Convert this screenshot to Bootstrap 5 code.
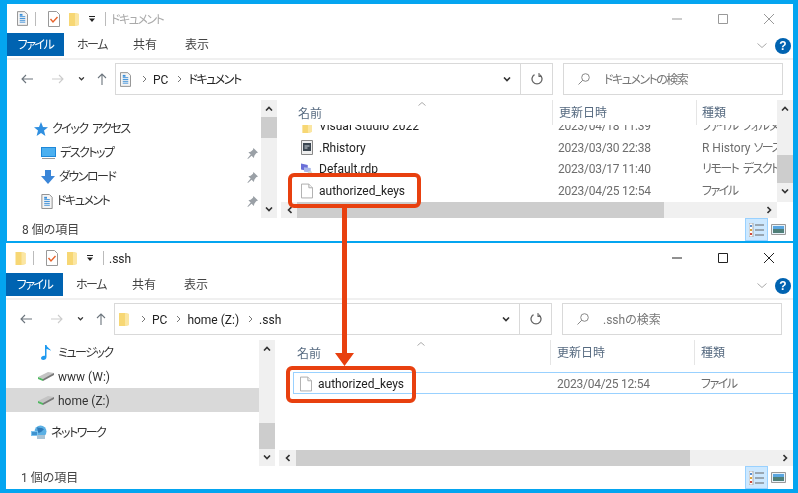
<!DOCTYPE html>
<html lang="ja">
<head>
<meta charset="UTF-8">
<title>authorized_keys</title>
<link href="https://cdn.jsdelivr.net/npm/bootstrap@5.3.0/dist/css/bootstrap.min.css" rel="stylesheet">
<style>
body { background: #04a5f0; width: 798px; height: 493px; overflow: hidden; font-family: Roboto, "Noto Sans CJK JP", sans-serif; font-size: 12px; color: #222; font-feature-settings: "palt"; }
svg { display: block; flex: none; }
.desk { position: relative; width: 798px; height: 493px; filter: blur(.35px); }
.expl { position: absolute; background: #fff; }
.expl-a { left: 7px; top: 4px; width: 786px; height: 237px; }
.expl-b { left: 6px; top: 243px; width: 787px; height: 246px; }
.kn { letter-spacing: -1.5px; word-spacing: 3px; }
.title-row { height: 29px; padding-left: 10px; color: #222; }
.expl-b .title-row { height: 30px; padding-left: 9px; }
.expl-a .title-row { color: #aaa; }
.title-row > span { padding-top: 2px; }
.t-first { margin-right: 7px; }
.t-check { margin-left: 12px; }
.t-fold { margin-left: 9px; }
.t-more { margin-left: 10px; }
.t-sep { width: 1px; height: 14px; background: #bbb; }
.t-sep2 { margin-left: 10px; margin-right: 5px; }
.win-btns { margin-left: auto; padding-right: 19px; gap: 36px; color: #222; }
.expl-a .win-btns { color: #999; }
.tab-row { height: 23px; }
.rb-tab { height: 23px; padding-left: 13px; color: #444; line-height: 25px; }
.tab-file { width: 57px; padding: 0; text-align: center; background: #0063b1; color: #fff; }
.tab-home { width: 56px; } .tab-share { width: 52px; } .tab-view { width: 50px; }
.rb-right { margin-left: auto; padding-right: 2px; padding-top: 2px; gap: 8px; }
.help-dot { width: 16px; height: 16px; border-radius: 50%; background: #0063b1; color: #fff; font-weight: 700; font-size: 12px; line-height: 16px; text-align: center; font-family: "Liberation Sans", sans-serif; }
.tool-row { border-top: 2px solid #f0f0f0; height: 42px; padding-top: 3px; margin-top: 2px; }
.nav-arrows { width: 108px; flex: none; height: 32px; padding-left: 14px; }
.na-fwd { margin-left: 19px; color: #ccc; transform: scaleX(-1); }
.na-dn { margin-left: 14px; }
.na-up { margin-left: 12px; }
.addr-box { width: 438px; height: 32px; border: 1px solid #d9d9d9; padding-left: 4px; color: #222; }
.addr-box > span, .srch-box > span { padding-top: 2px; }
.crumb { margin-left: 9px; margin-right: 6px; }
.addr-folder { margin-right: 3px; }
.addr-doc { margin-right: 2px; }
.addr-end { margin-left: auto; }
.addr-chev { margin-right: 9px; }
.addr-refresh { width: 32px; height: 30px; border-left: 1px solid #d9d9d9; }
.srch-box { width: 220px; height: 32px; margin-left: 10px; border: 1px solid #d9d9d9; padding-left: 14px; gap: 14px; color: #777; }
.body-row { height: 118px; }
.expl-b .body-row { height: 126px; }
.side { width: 254px; flex: none; overflow: hidden; padding-top: 17px; color: #333; }
.expl-b .side { width: 253px; padding-top: 0; }
.expl-b .side-item span { padding-top: 2px; }
.side-item { height: 24px; }
.ind-1 { padding-left: 27px; gap: 4px; }
.ind-2 { padding-left: 34px; gap: 4px; }
.ind-d { padding-left: 32px; gap: 4px; }
.ind-m { padding-left: 35px; gap: 6px; }
.ind-3 { padding-left: 25px; gap: 4px; }
.side-on { background: #d9d9d9; }
.pin-ic { margin-left: auto; margin-right: 3px; }
.sbar { width: 16px; flex: none; background: #f0f0f0; }
.sb-btn { height: 17px; flex: none; }
.sb-thumb { background: #cdcdcd; flex: none; }
.sb-fill { flex: 1 1 auto; }
.files { flex: 1 1 auto; min-width: 0; margin-left: 3px; }
.expl-b .files { margin-left: 4px; }
.head-row { height: 25px; flex: none; color: #566a80; position: relative; }
.col-n { width: 272px; flex: none; }
.col-d { width: 144px; flex: none; }
.expl-b .col-n { width: 271px; }
.head-row .col-n { padding-left: 18px; padding-top: 2px; }
.head-row .col-d, .head-row .col-t { border-left: 1px solid #e5e5e5; padding-left: 6px; height: 25px; line-height: 27px; }
.expl-a .head-row .col-t { padding-left: 5px; }
.sort-ic { position: absolute; left: 138px; top: 2px; }
.list-wrap { flex: 1 1 auto; overflow: hidden; min-height: 0; }
.file-row { height: 21.5px; color: #6d6d6d; }
.row-first { margin-top: -9.5px; }
.file-row .col-n { padding-left: 21px; gap: 6px; color: #222; }
.file-row .col-d { padding-left: 6px; letter-spacing: -.25px; }
.file-row .col-t { padding-left: 6px; white-space: nowrap; }
.row-sel { height: 22px; margin-top: 7px; margin-left: 14px; border: 1px solid #99d1ff; border-right: 0; padding-top: 1px; }
.expl-b .row-sel .col-n { width: 256px; padding-left: 6px; }
.row-sel .col-d { padding-left: 7px; }
.row-sel .col-t { padding-left: 7px; }
.hbar { height: 16px; flex: none; background: #f0f0f0; margin-left: 1px; }
.expl-b .hbar { margin-left: 0; }
.hb-btn { width: 16px; flex: none; }
.hb-corner { width: 16px; flex: none; background: #fff; }
.hb-thumb { background: #cdcdcd; flex: none; }
.thumb-a { width: 367px; } .thumb-b { width: 394px; margin-left: 1px; }
.vthumb-a { margin-top: 38px; height: 28px; }
.sthumb-a { height: 21px; } .sthumb-b { height: 26px; margin-top: 66px; }
.stat-row { height: 23px; padding-left: 15px; color: #444; }
.view-btns { margin-left: auto; padding-right: 7px; gap: 3px; }
.view-on { width: 23px; height: 23px; background: #cce8ff; border: 1px solid #99d1ff; }
.hl-box { position: absolute; border: 4px solid #e8400f; border-radius: 6px; }
.hl-a { left: 288px; top: 173px; width: 133px; height: 35px; }
.hl-b { left: 286px; top: 366px; width: 130px; height: 37px; }
.drop-arrow { position: absolute; left: 334px; top: 208px; }
</style>
</head>
<body>
<svg width="0" height="0" style="position:absolute">
  <defs>
    <symbol id="i-folder" viewBox="0 0 10 14"><path d="M0 1h6l4 1v11l-4 1H0z" fill="#f7d774"/><path d="M6 1v13l4-1V2z" fill="#fbe6a2"/></symbol>
    <symbol id="i-docs" viewBox="0 0 12 16"><path d="M.5.5h8l3 3v12H.5z" fill="#f4f4f4" stroke="#8a8a8a"/><path d="M3 6h6M3 8h6M3 10h6M3 12h6" stroke="#3a8ed8"/><path d="M3 3h3v2H3z" fill="#3a8ed8"/></symbol>
    <symbol id="i-check" viewBox="0 0 12 16"><path d="M.5.5h8l3 3v12H.5z" fill="#fff" stroke="#999"/><path d="M2.5 8l2.5 3 4.5-5" fill="none" stroke="#e8642c" stroke-width="1.4"/></symbol>
    <symbol id="i-file" viewBox="0 0 13 16"><path d="M.5.5h8l4 4v11H.5z" fill="#fff" stroke="#a8a8a8"/><path d="M8.5.5v4h4" fill="#f2f2f2" stroke="#a8a8a8"/></symbol>
    <symbol id="i-star" viewBox="0 0 14 14"><path d="M7 0l2 5 5 .3-4 3.2L11.4 14 7 11l-4.4 3L4 8.5 0 5.3 5 5z" fill="#2f8fe0"/></symbol>
    <symbol id="i-desk" viewBox="0 0 15 12"><path d="M0 0h15v10H0z" fill="#1e88d9"/><path d="M1 1h13v8H1z" fill="#4cb0f0"/><path d="M1 11h13v1H1z" fill="#9a9a9a"/></symbol>
    <symbol id="i-down" viewBox="0 0 14 14"><path d="M4 0h6v6h4l-7 8-7-8h4z" fill="#3b86d8"/></symbol>
    <symbol id="i-pin" viewBox="0 0 12 12"><path d="M7 0l5 5-2 .6L8 8.5 7.5 11 5 8.5 1 12l-.5-.5L4 7 1.5 4.5 4 4l2.5-2z" fill="#9aa0a6"/></symbol>
    <symbol id="i-note" viewBox="0 0 11 15"><path d="M4 0h1.500c.3 2.500 4 3.500 4.500 6-1-1-3-1.800-4.500-2v8c0 1.800-1.500 3-3.300 3C.9 15 0 14.200 0 13c0-1.500 2-2.600 4-2.200z" fill="#1f9af0"/></symbol>
    <symbol id="i-drive" viewBox="0 0 16 10"><path d="M0 6l10-5 6 1-1 2L5 8z" fill="#c4c4c4"/><path d="M0 6l5 2v2L0 8z" fill="#4fb860"/><path d="M5 8l11-6v2L5 10z" fill="#777"/></symbol>
    <symbol id="i-net" viewBox="0 0 16 15"><circle cx="9.500" cy="6.500" r="6" fill="#5bb0e4"/><path d="M6 2c2 1.500 5 0 7 2.500-2 1-3 4-6 3z" fill="#2d79b8"/><path d="M0 6h7v5H0z" fill="#7cc2ee"/><path d="M1 7h5v3H1z" fill="#3f93d0"/><path d="M6 10h8v4H6z" fill="#a9c4d6"/></symbol>
    <symbol id="i-hist" viewBox="0 0 12 15"><path d="M.5.5h11v14H.5z" fill="#eee" stroke="#888"/><path d="M2 3h8v8H2z" fill="#3b4650"/><path d="M3.500 6h5M3.500 8h3" stroke="#cfd6dc"/></symbol>
    <symbol id="i-rdp" viewBox="0 0 16 16"><path d="M0 0l9 2v8L0 8z" fill="#6a6fd8"/><path d="M4 5l9 1v6l-9-1z" fill="#a9b6ea"/><circle cx="12" cy="13" r="3" fill="#cfd8cf"/></symbol>
    <symbol id="i-detail" viewBox="0 0 15 14"><path d="M0 0h4v14H0z" fill="#fff" stroke="#aaa"/><path d="M1 2h2v2H1z" fill="#5a8fd0"/><path d="M1 6h2v2H1z" fill="#d9a23a"/><path d="M1 10h2v2H1z" fill="#d04a3a"/><path d="M6 2h9M6 7h9M6 12h9" stroke="#666"/></symbol>
    <symbol id="i-thumb" viewBox="0 0 15 11"><path d="M.5.5h14v10H.5z" fill="#e8f2fa" stroke="#999"/><path d="M2 2h11v3H2z" fill="#5aa6e0"/><path d="M2 5h11v4H2z" fill="#4f7f78"/></symbol>
    <symbol id="i-up" viewBox="0 0 8 5"><path d="M1 4.500l3-3 3 3" fill="none" stroke="#333" stroke-width="1.600"/></symbol>
    <symbol id="i-dn" viewBox="0 0 8 5"><path d="M1 .5l3 3 3-3" fill="none" stroke="#333" stroke-width="1.600"/></symbol>
    <symbol id="i-lf" viewBox="0 0 5 8"><path d="M4.500 1l-3 3 3 3" fill="none" stroke="#333" stroke-width="1.600"/></symbol>
    <symbol id="i-rt" viewBox="0 0 5 8"><path d="M.5 1l3 3-3 3" fill="none" stroke="#333" stroke-width="1.600"/></symbol>
    <symbol id="i-back" viewBox="0 0 12 10"><path d="M12 5H1M5 1L1 5l4 4" fill="none" stroke="currentColor" stroke-width="1.100"/></symbol>
    <symbol id="i-upar" viewBox="0 0 10 12"><path d="M5 12V1M1 5l4-4 4 4" fill="none" stroke="currentColor" stroke-width="1.100"/></symbol>
    <symbol id="i-refresh" viewBox="0 0 12 12"><path d="M8.500 1.600a5 5 0 1 1-5 0" fill="none" stroke="#666" stroke-width="1.300"/><path d="M8 0v3.500h3" fill="none" stroke="#666" stroke-width="1.100"/></symbol>
    <symbol id="i-find" viewBox="0 0 12 12"><circle cx="7.500" cy="4.500" r="3.800" fill="none" stroke="#888"/><path d="M4.800 7.200L.5 11.500" stroke="#888"/></symbol>
    <symbol id="i-crumb" viewBox="0 0 5 8"><path d="M1 1l3 3-3 3" fill="none" stroke="#777"/></symbol>
    <symbol id="i-min" viewBox="0 0 10 10"><path d="M0 5h10" stroke="currentColor"/></symbol>
    <symbol id="i-max" viewBox="0 0 10 10"><path d="M.5.5h9v9h-9z" fill="none" stroke="currentColor"/></symbol>
    <symbol id="i-close" viewBox="0 0 10 10"><path d="M0 0l10 10M10 0L0 10" stroke="currentColor"/></symbol>
    <symbol id="i-more" viewBox="0 0 6 6"><path d="M0 0h6v1H0zM0 2.500h6L3 6z" fill="#222"/></symbol>
    <symbol id="i-fold" viewBox="0 0 10 5"><path d="M.5.5L5 4.500 9.500.5" fill="none" stroke="#aaa"/></symbol>
    <symbol id="i-sort" viewBox="0 0 8 4"><path d="M.5 3.500L4 .5l3.500 3" fill="none" stroke="#aaa"/></symbol>
  </defs>
</svg>

<div class="desk">
  <!-- upper window -->
  <div class="expl expl-a d-flex flex-column">
    <div class="title-row d-flex align-items-center">
      <svg class="t-first" width="11" height="15"><use href="#i-docs"/></svg>
      <div class="t-sep"></div>
      <svg class="t-check" width="12" height="16"><use href="#i-check"/></svg>
      <svg class="t-fold" width="10" height="14"><use href="#i-folder"/></svg>
      <svg class="t-more" width="6" height="6"><use href="#i-more"/></svg>
      <div class="t-sep t-sep2"></div>
      <span class="kn">ドキュメント</span>
      <div class="win-btns d-flex align-items-center">
        <svg width="10" height="10"><use href="#i-min"/></svg>
        <svg width="10" height="10"><use href="#i-max"/></svg>
        <svg width="10" height="10"><use href="#i-close"/></svg>
      </div>
    </div>
    <div class="tab-row d-flex">
      <div class="rb-tab tab-file kn">ファイル</div>
      <div class="rb-tab tab-home kn">ホーム</div>
      <div class="rb-tab tab-share">共有</div>
      <div class="rb-tab tab-view">表示</div>
      <div class="rb-right d-flex align-items-center">
        <svg width="10" height="5"><use href="#i-fold"/></svg>
        <div class="help-dot">?</div>
      </div>
    </div>
    <div class="tool-row d-flex">
      <div class="nav-arrows d-flex align-items-center">
        <svg class="text-secondary" width="12" height="10"><use href="#i-back"/></svg>
        <svg class="na-fwd" width="12" height="10"><use href="#i-back"/></svg>
        <svg class="na-dn" width="7" height="4"><use href="#i-dn"/></svg>
        <svg class="na-up text-secondary" width="10" height="12"><use href="#i-upar"/></svg>
      </div>
      <div class="addr-box d-flex align-items-center">
        <svg class="addr-doc" width="11" height="15"><use href="#i-docs"/></svg>
        <svg class="crumb" width="5" height="8"><use href="#i-crumb"/></svg>
        <span>PC</span>
        <svg class="crumb" width="5" height="8"><use href="#i-crumb"/></svg>
        <span class="kn">ドキュメント</span>
        <div class="addr-end d-flex align-items-center">
          <svg class="addr-chev" width="8" height="5"><use href="#i-dn"/></svg>
          <div class="addr-refresh d-flex align-items-center justify-content-center"><svg width="12" height="12"><use href="#i-refresh"/></svg></div>
        </div>
      </div>
      <div class="srch-box d-flex align-items-center">
        <svg width="12" height="12"><use href="#i-find"/></svg>
        <span class="kn">ドキュメントの検索</span>
      </div>
    </div>
    <div class="body-row d-flex">
      <div class="side">
        <div class="side-item ind-1 d-flex align-items-center"><svg width="14" height="14"><use href="#i-star"/></svg><span class="kn">クイック アクセス</span></div>
        <div class="side-item ind-2 d-flex align-items-center"><svg width="15" height="12"><use href="#i-desk"/></svg><span class="kn">デスクトップ</span><svg class="pin-ic" width="11" height="11"><use href="#i-pin"/></svg></div>
        <div class="side-item ind-2 d-flex align-items-center"><svg width="14" height="14"><use href="#i-down"/></svg><span class="kn">ダウンロード</span><svg class="pin-ic" width="11" height="11"><use href="#i-pin"/></svg></div>
        <div class="side-item ind-2 d-flex align-items-center"><svg width="12" height="15"><use href="#i-docs"/></svg><span class="kn">ドキュメント</span><svg class="pin-ic" width="11" height="11"><use href="#i-pin"/></svg></div>
      </div>
      <div class="sbar d-flex flex-column">
        <div class="sb-btn d-flex align-items-center justify-content-center"><svg width="8" height="5"><use href="#i-up"/></svg></div>
        <div class="sb-thumb sthumb-a"></div>
        <div class="sb-fill"></div>
        <div class="sb-btn d-flex align-items-center justify-content-center"><svg width="8" height="5"><use href="#i-dn"/></svg></div>
      </div>
      <div class="files d-flex flex-column">
        <div class="d-flex flex-grow-1" style="min-height:0">
          <div class="d-flex flex-column flex-grow-1" style="min-width:0">
            <div class="head-row d-flex align-items-center">
              <div class="col-n">名前</div>
              <div class="col-d">更新日時</div>
              <div class="col-t flex-grow-1">種類</div>
              <svg class="sort-ic" width="8" height="4"><use href="#i-sort"/></svg>
            </div>
            <div class="list-wrap">
              <div class="file-row row-first d-flex align-items-center"><div class="col-n d-flex align-items-center"><svg width="12" height="13"><use href="#i-folder"/></svg><span>Visual Studio 2022</span></div><div class="col-d">2023/04/18 11:39</div><div class="col-t kn">ファイル フォルダー</div></div>
              <div class="file-row d-flex align-items-center"><div class="col-n d-flex align-items-center"><svg width="12" height="15"><use href="#i-hist"/></svg><span>.Rhistory</span></div><div class="col-d">2023/03/30 22:38</div><div class="col-t">R History <span class="kn">ソース</span></div></div>
              <div class="file-row d-flex align-items-center"><div class="col-n d-flex align-items-center"><svg width="12" height="15"><use href="#i-rdp"/></svg><span>Default.rdp</span></div><div class="col-d">2023/03/17 11:40</div><div class="col-t kn">リモート デスクトップ</div></div>
              <div class="file-row d-flex align-items-center"><div class="col-n d-flex align-items-center"><svg width="12" height="16"><use href="#i-file"/></svg><span>authorized_keys</span></div><div class="col-d">2023/04/25 12:54</div><div class="col-t kn">ファイル</div></div>
            </div>
          </div>
          <div class="sbar d-flex flex-column">
            <div class="sb-btn d-flex align-items-center justify-content-center"><svg width="8" height="5"><use href="#i-up"/></svg></div>
            <div class="sb-thumb vthumb-a"></div>
            <div class="sb-btn d-flex align-items-center justify-content-center"><svg width="8" height="5"><use href="#i-dn"/></svg></div>
          </div>
        </div>
        <div class="hbar d-flex">
          <div class="hb-btn d-flex align-items-center justify-content-center"><svg width="5" height="8"><use href="#i-lf"/></svg></div>
          <div class="hb-thumb thumb-a"></div>
          <div class="sb-fill"></div>
          <div class="hb-btn d-flex align-items-center justify-content-center"><svg width="5" height="8"><use href="#i-rt"/></svg></div>
          <div class="hb-corner"></div>
        </div>
      </div>
    </div>
    <div class="stat-row d-flex align-items-center">
      <span>8 個の項目</span>
      <div class="view-btns d-flex align-items-center">
        <div class="view-on d-flex align-items-center justify-content-center"><svg width="15" height="14"><use href="#i-detail"/></svg></div>
        <svg width="15" height="11"><use href="#i-thumb"/></svg>
      </div>
    </div>
  </div>

  <!-- lower window -->
  <div class="expl expl-b d-flex flex-column">
    <div class="title-row d-flex align-items-center">
      <svg class="t-first" width="11" height="14"><use href="#i-folder"/></svg>
      <div class="t-sep"></div>
      <svg class="t-check" width="12" height="16"><use href="#i-check"/></svg>
      <svg class="t-fold" width="10" height="14"><use href="#i-folder"/></svg>
      <svg class="t-more" width="6" height="6"><use href="#i-more"/></svg>
      <div class="t-sep t-sep2"></div>
      <span>.ssh</span>
      <div class="win-btns d-flex align-items-center">
        <svg width="10" height="10"><use href="#i-min"/></svg>
        <svg width="10" height="10"><use href="#i-max"/></svg>
        <svg width="10" height="10"><use href="#i-close"/></svg>
      </div>
    </div>
    <div class="tab-row d-flex">
      <div class="rb-tab tab-file kn">ファイル</div>
      <div class="rb-tab tab-home kn">ホーム</div>
      <div class="rb-tab tab-share">共有</div>
      <div class="rb-tab tab-view">表示</div>
      <div class="rb-right d-flex align-items-center">
        <svg width="10" height="5"><use href="#i-fold"/></svg>
        <div class="help-dot">?</div>
      </div>
    </div>
    <div class="tool-row d-flex">
      <div class="nav-arrows d-flex align-items-center">
        <svg class="text-secondary" width="12" height="10"><use href="#i-back"/></svg>
        <svg class="na-fwd" width="12" height="10"><use href="#i-back"/></svg>
        <svg class="na-dn" width="7" height="4"><use href="#i-dn"/></svg>
        <svg class="na-up text-secondary" width="10" height="12"><use href="#i-upar"/></svg>
      </div>
      <div class="addr-box d-flex align-items-center">
        <svg class="addr-folder" width="10" height="14"><use href="#i-folder"/></svg>
        <svg class="crumb" width="5" height="8"><use href="#i-crumb"/></svg>
        <span>PC</span>
        <svg class="crumb" width="5" height="8"><use href="#i-crumb"/></svg>
        <span>home (Z:)</span>
        <svg class="crumb" width="5" height="8"><use href="#i-crumb"/></svg>
        <span>.ssh</span>
        <div class="addr-end d-flex align-items-center">
          <svg class="addr-chev" width="8" height="5"><use href="#i-dn"/></svg>
          <div class="addr-refresh d-flex align-items-center justify-content-center"><svg width="12" height="12"><use href="#i-refresh"/></svg></div>
        </div>
      </div>
      <div class="srch-box d-flex align-items-center">
        <svg width="12" height="12"><use href="#i-find"/></svg>
        <span>.sshの検索</span>
      </div>
    </div>
    <div class="body-row d-flex">
      <div class="side">
        <div class="side-item ind-m d-flex align-items-center"><svg width="11" height="15"><use href="#i-note"/></svg><span class="kn">ミュージック</span></div>
        <div class="side-item ind-d d-flex align-items-center"><svg width="16" height="10"><use href="#i-drive"/></svg><span>www (W:)</span></div>
        <div class="side-item ind-d side-on d-flex align-items-center"><svg width="16" height="10"><use href="#i-drive"/></svg><span>home (Z:)</span></div>
        <div class="side-item ind-3 mt-2 d-flex align-items-center"><svg width="16" height="15"><use href="#i-net"/></svg><span class="kn">ネットワーク</span></div>
      </div>
      <div class="sbar d-flex flex-column">
        <div class="sb-btn d-flex align-items-center justify-content-center"><svg width="8" height="5"><use href="#i-up"/></svg></div>
        <div class="sb-thumb sthumb-b"></div>
        <div class="sb-fill"></div>
        <div class="sb-btn d-flex align-items-center justify-content-center"><svg width="8" height="5"><use href="#i-dn"/></svg></div>
      </div>
      <div class="files d-flex flex-column">
        <div class="d-flex flex-column flex-grow-1" style="min-height:0">
          <div class="head-row d-flex align-items-center">
            <div class="col-n">名前</div>
            <div class="col-d">更新日時</div>
            <div class="col-t flex-grow-1">種類</div>
            <svg class="sort-ic" width="8" height="4"><use href="#i-sort"/></svg>
          </div>
          <div class="list-wrap">
            <div class="file-row row-sel d-flex align-items-center"><div class="col-n d-flex align-items-center"><svg width="12" height="16"><use href="#i-file"/></svg><span>authorized_keys</span></div><div class="col-d">2023/04/25 12:54</div><div class="col-t kn">ファイル</div></div>
          </div>
        </div>
        <div class="hbar d-flex">
          <div class="hb-btn d-flex align-items-center justify-content-center"><svg width="5" height="8"><use href="#i-lf"/></svg></div>
          <div class="hb-thumb thumb-b"></div>
          <div class="sb-fill"></div>
          <div class="hb-btn d-flex align-items-center justify-content-center"><svg width="5" height="8"><use href="#i-rt"/></svg></div>
        </div>
      </div>
    </div>
    <div class="stat-row d-flex align-items-center">
      <span>1 個の項目</span>
      <div class="view-btns d-flex align-items-center">
        <div class="view-on d-flex align-items-center justify-content-center"><svg width="15" height="14"><use href="#i-detail"/></svg></div>
        <svg width="15" height="11"><use href="#i-thumb"/></svg>
      </div>
    </div>
  </div>

  <!-- annotation over the two windows -->
  <div class="hl-box hl-a"></div>
  <div class="hl-box hl-b"></div>
  <svg class="drop-arrow" width="20" height="158" viewBox="0 0 20 158"><path d="M8 0h5v145h7l-9.500 13L1 145h7z" fill="#e8400f"/></svg>
</div>
<script src="https://cdn.jsdelivr.net/npm/bootstrap@5.3.0/dist/js/bootstrap.bundle.min.js"></script>
</body>
</html>
